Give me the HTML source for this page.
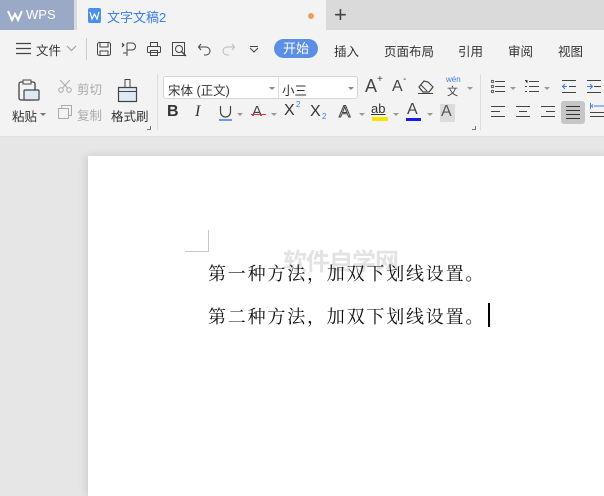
<!DOCTYPE html>
<html><head><meta charset="utf-8"><style>
*{margin:0;padding:0;box-sizing:border-box}
body{width:604px;height:487px;overflow:hidden;background:#e6e6e6;font-family:"Liberation Sans","Noto Sans CJK SC",sans-serif;position:relative;color:#333}
.a{position:absolute;white-space:nowrap}
svg{position:absolute;overflow:visible}
.t{font-size:12.5px;color:#333}
.g{color:#aaa}
</style></head><body>
<div class="a" style="left:0;top:0;width:604px;height:30px;background:#dadada"></div>
<div class="a" style="left:0;top:0;width:74px;height:30px;background:#9aa9c6"></div>
<div class="a" style="left:26px;top:7px;font-size:13px;color:#fff">WPS</div>
<svg style="left:8px;top:10px" width="14" height="11"><path d="M0 1 L4 10 L7 4 L10 10 L14 1" stroke="#fff" stroke-width="2" fill="none"/></svg>
<div class="a" style="left:77px;top:0;width:249px;height:30px;background:#f3f3f3"></div>
<div class="a" style="left:88px;top:8px;width:13px;height:15px;background:#4a8ef0;border-radius:2px"></div>
<svg style="left:90px;top:12px" width="9" height="7"><path d="M0 0 L2 7 L4.5 2 L7 7 L9 0" stroke="#fff" stroke-width="1.2" fill="none"/></svg>
<div class="a" style="left:107px;top:7px;font-size:13px;color:#3b7ee8">文字文稿2</div>
<div class="a" style="left:308px;top:13px;width:6px;height:6px;border-radius:3px;background:#e9a060"></div>
<div class="a" style="left:334px;top:0px;font-size:22px;color:#444;line-height:30px">+</div>
<div class="a" style="left:0;top:30px;width:604px;height:107px;background:#f3f3f3;border-bottom:1px solid #e0e0e0"></div>
<svg style="left:16px;top:43px" width="15" height="11"><path d="M0 .5H15M0 5.5H15M0 10.5H15" stroke="#444" stroke-width="1.2"/></svg>
<div class="a t" style="left:36px;top:40px">文件</div>
<svg style="left:67px;top:46px" width="9" height="5"><path d="M0 0L4.5 4.5L9 0" stroke="#999" fill="none"/></svg>
<div class="a" style="left:86px;top:38px;width:1px;height:22px;background:#ccc"></div>
<svg style="left:97px;top:42px" width="14" height="14"><rect x=".5" y=".5" width="13" height="13" rx="2" fill="none" stroke="#444"/><path d="M3 .5V5H11V.5M3 13.5V9H11V13.5" stroke="#444" fill="none"/></svg>
<svg style="left:122px;top:42px" width="14" height="14"><path d="M2 3H0M0 1L2 3L0 5M5 1H10A3 3 0 0 1 10 8H5V1M5 8V14M1 11H5" stroke="#444" fill="none"/></svg>
<svg style="left:147px;top:42px" width="14" height="14"><rect x=".5" y="4.5" width="13" height="6" rx="1" fill="none" stroke="#444"/><rect x="3.5" y=".5" width="7" height="4" fill="none" stroke="#444"/><rect x="3.5" y="8.5" width="7" height="5" fill="none" stroke="#444"/></svg>
<svg style="left:172px;top:42px" width="15" height="14"><rect x=".5" y=".5" width="12" height="13" fill="none" stroke="#444"/><circle cx="7" cy="7" r="3.5" fill="#f3f3f3" stroke="#444"/><path d="M9.5 9.5L14 14" stroke="#444" stroke-width="1.4"/></svg>
<svg style="left:198px;top:43px" width="13" height="12"><path d="M3 1L0.5 4L3 7M0.5 4H8A4 4 0 0 1 8 12H6" stroke="#444" fill="none"/></svg>
<svg style="left:222px;top:43px" width="13" height="12"><path d="M10 1L12.5 4L10 7M12.5 4H5A4 4 0 0 0 5 12H7" stroke="#bbb" fill="none"/></svg>
<svg style="left:250px;top:46px" width="8" height="6"><path d="M0 .5H8M0 2L4 6L8 2" stroke="#444" fill="none"/></svg>
<div class="a" style="left:274px;top:39px;width:44px;height:19px;border-radius:10px;background:#5b8fe5;color:#fff;font-size:13px;text-align:center;line-height:19px">开始</div>
<div class="a t" style="left:334px;top:41px">插入</div>
<div class="a t" style="left:384px;top:41px">页面布局</div>
<div class="a t" style="left:458px;top:41px">引用</div>
<div class="a t" style="left:508px;top:41px">审阅</div>
<div class="a t" style="left:558px;top:41px">视图</div>
<svg style="left:18px;top:79px" width="22" height="22"><rect x="1" y="3" width="16" height="18" rx="2" fill="none" stroke="#444" stroke-width="1.3"/><rect x="5" y="1" width="8" height="4" fill="#f3f3f3" stroke="#444"/><rect x="6" y="11" width="15" height="10" rx="1" fill="#dfe8f5" stroke="#444" stroke-width="1.2"/></svg>
<div class="a t" style="left:12px;top:106px">粘贴</div>
<svg style="left:40px;top:113px" width="6" height="3"><path d="M0 0H6L3 3Z" fill="#777"/></svg>
<svg style="left:58px;top:80px" width="14" height="13"><circle cx="3" cy="10" r="2.3" fill="none" stroke="#aaa"/><circle cx="11" cy="10" r="2.3" fill="none" stroke="#aaa"/><path d="M4.5 8L12 0M9.5 8L2 0" stroke="#aaa"/></svg>
<div class="a t g" style="left:77px;top:79px">剪切</div>
<svg style="left:58px;top:105px" width="14" height="14"><rect x="3.5" y=".5" width="10" height="10" fill="none" stroke="#aaa"/><rect x=".5" y="3.5" width="10" height="10" fill="#f3f3f3" stroke="#aaa"/></svg>
<div class="a t g" style="left:77px;top:105px">复制</div>
<svg style="left:117px;top:79px" width="22" height="23"><rect x="8" y=".5" width="5" height="8" fill="none" stroke="#444"/><path d="M1.5 8.5H19.5V22.5H1.5Z" fill="#dfe8f5" stroke="#444" stroke-width="1.2"/><path d="M1.5 12.5H19.5" stroke="#444"/></svg>
<div class="a t" style="left:111px;top:106px">格式刷</div>
<svg style="left:147px;top:126px" width="4" height="4"><path d="M3.5 0V3.5H0" stroke="#777" fill="none"/></svg>
<div class="a" style="left:157px;top:74px;width:1px;height:56px;background:#ddd"></div>
<div class="a" style="left:163px;top:76px;width:195px;height:23px;background:#fff;border:1px solid #d6d6d6;border-radius:3px"></div>
<div class="a" style="left:278px;top:77px;width:1px;height:21px;background:#ddd"></div>
<div class="a t" style="left:168px;top:80px">宋体 (正文)</div>
<svg style="left:269px;top:87px" width="6" height="3"><path d="M0 0H6L3 3Z" fill="#888"/></svg>
<div class="a t" style="left:282px;top:80px">小三</div>
<svg style="left:348px;top:87px" width="6" height="3"><path d="M0 0H6L3 3Z" fill="#888"/></svg>
<div class="a" style="left:365px;top:76px;font-size:18px;color:#444">A</div><div class="a" style="left:377px;top:74px;font-size:10px;color:#444">+</div>
<div class="a" style="left:392px;top:78px;font-size:16px;color:#444">A</div><div class="a" style="left:403px;top:74px;font-size:10px;color:#444">-</div>
<svg style="left:418px;top:80px" width="16" height="14"><path d="M6 1L1 7L5 12H11L15 7L10 2Z" fill="none" stroke="#444" stroke-width="1.2"/><path d="M3 5L9 11M0 13.5H15" stroke="#444"/></svg>
<div class="a" style="left:446px;top:75px;font-size:8px;color:#3b7ee8">wén</div>
<div class="a" style="left:447px;top:83px;font-size:11px;color:#444">文</div>
<svg style="left:467px;top:87px" width="6" height="3"><path d="M0 0H6L3 3Z" fill="#999"/></svg>
<div class="a" style="left:167px;top:103px;font-size:16px;font-weight:bold;color:#333">B</div>
<div class="a" style="left:195px;top:103px;font-size:16px;font-style:italic;font-family:'Liberation Serif',serif;color:#333">I</div>
<svg style="left:219px;top:106px" width="13" height="15"><path d="M1.5 0V6A5 5 0 0 0 11.5 6V0" stroke="#444" fill="none" stroke-width="1.2"/><path d="M0 14H13" stroke="#3b7ee8" stroke-width="1.5"/></svg>
<svg style="left:237px;top:113px" width="6" height="3"><path d="M0 0H6L3 3Z" fill="#999"/></svg>
<div class="a" style="left:252px;top:103px;font-size:15px;color:#444">A</div>
<div class="a" style="left:251px;top:114px;width:15px;height:1px;background:#e33"></div>
<svg style="left:271px;top:113px" width="6" height="3"><path d="M0 0H6L3 3Z" fill="#999"/></svg>
<div class="a" style="left:284px;top:102px;font-size:16px;color:#333">X</div><div class="a" style="left:296px;top:100px;font-size:8px;color:#3b7ee8">2</div>
<div class="a" style="left:310px;top:103px;font-size:16px;color:#333">X</div><div class="a" style="left:322px;top:112px;font-size:8px;color:#3b7ee8">2</div>
<div class="a" style="left:339px;top:102px;font-size:17px;color:#fff;-webkit-text-stroke:1px #444">A</div>
<svg style="left:359px;top:113px" width="6" height="3"><path d="M0 0H6L3 3Z" fill="#999"/></svg>
<div class="a" style="left:371px;top:101px;font-size:13px;color:#333;text-decoration:underline">ab</div>
<div class="a" style="left:372px;top:117px;width:16px;height:4px;background:#f5e600"></div>
<svg style="left:393px;top:113px" width="6" height="3"><path d="M0 0H6L3 3Z" fill="#999"/></svg>
<div class="a" style="left:407px;top:101px;font-size:16px;color:#444">A</div>
<div class="a" style="left:406px;top:118px;width:15px;height:3px;background:#1a1ae8"></div>
<svg style="left:427px;top:113px" width="6" height="3"><path d="M0 0H6L3 3Z" fill="#999"/></svg>
<div class="a" style="left:440px;top:104px;width:15px;height:18px;background:#dcdcdc"></div>
<div class="a" style="left:441px;top:103px;font-size:16px;color:#555">A</div>
<svg style="left:472px;top:126px" width="4" height="4"><path d="M3.5 0V3.5H0" stroke="#777" fill="none"/></svg>
<div class="a" style="left:480px;top:74px;width:1px;height:56px;background:#ddd"></div>
<svg style="left:491px;top:80px" width="14" height="13"><circle cx="1.5" cy="1.5" r="1.2" fill="none" stroke="#444" stroke-width=".8"/><circle cx="1.5" cy="6.5" r="1.2" fill="none" stroke="#444" stroke-width=".8"/><circle cx="1.5" cy="11.5" r="1.2" fill="none" stroke="#444" stroke-width=".8"/><path d="M4 1.5H14M4 6.5H14M4 11.5H14" stroke="#444"/></svg>
<svg style="left:510px;top:87px" width="6" height="3"><path d="M0 0H6L3 3Z" fill="#999"/></svg>
<svg style="left:525px;top:80px" width="14" height="13"><path d="M0 .5H2V3M0 6.5H2M0 11.5H2M4 1.5H14M4 6.5H14M4 11.5H14" stroke="#444"/></svg>
<svg style="left:544px;top:87px" width="6" height="3"><path d="M0 0H6L3 3Z" fill="#999"/></svg>
<svg style="left:562px;top:80px" width="14" height="13"><path d="M0 .5H14M7 6.5H14M0 12.5H14" stroke="#444"/><path d="M5 6.5H0M3 4L0.5 6.5L3 9" stroke="#3b7ee8" fill="none"/></svg>
<svg style="left:587px;top:80px" width="14" height="13"><path d="M0 .5H14M7 6.5H14M0 12.5H14" stroke="#444"/><path d="M0 6.5H5M3 4L5.5 6.5L3 9" stroke="#3b7ee8" fill="none"/></svg>
<svg style="left:491px;top:106px" width="14" height="12"><path d="M0 .5H14M0 5.5H9M0 10.5H14" stroke="#444"/></svg>
<svg style="left:516px;top:106px" width="14" height="12"><path d="M0 .5H14M3 5.5H11M0 10.5H14" stroke="#444"/></svg>
<svg style="left:541px;top:106px" width="14" height="12"><path d="M0 .5H14M5 5.5H14M0 10.5H14" stroke="#444"/></svg>
<div class="a" style="left:561px;top:101px;width:24px;height:23px;background:#c6c6c6;border-radius:3px"></div>
<svg style="left:566px;top:106px" width="14" height="13"><path d="M0 .5H14M0 4.5H14M0 8.5H14M0 12.5H14" stroke="#333"/></svg>
<svg style="left:590px;top:103px" width="14" height="14"><path d="M0.5 0V6M4 3H14M3 1.5L1.5 3L3 4.5" stroke="#3b7ee8" fill="none"/><path d="M0 9.5H14M0 13.5H14" stroke="#444"/></svg>
<div class="a" style="left:88px;top:156px;width:520px;height:340px;background:#fff;box-shadow:-2px 0 8px rgba(0,0,0,.12)"></div>
<div class="a" style="left:208px;top:230px;width:1px;height:22px;background:#c8c8c8"></div>
<div class="a" style="left:185px;top:251px;width:24px;height:1px;background:#c8c8c8"></div>
<div class="a" style="left:283px;top:242px;font-size:24px;color:rgba(200,200,200,.5);font-weight:bold;letter-spacing:-1px">软件自学网</div>
<div class="a" style="left:208px;top:260px;font-size:18px;color:#111;font-family:'Noto Serif CJK SC','Liberation Serif',serif;letter-spacing:1.8px">第一种方法，加双下划线设置。</div>
<div class="a" style="left:208px;top:303px;font-size:18px;color:#111;font-family:'Noto Serif CJK SC','Liberation Serif',serif;letter-spacing:1.8px">第二种方法，加双下划线设置。</div>
<div class="a" style="left:488px;top:303px;width:2px;height:24px;background:#000"></div>
</body></html>
